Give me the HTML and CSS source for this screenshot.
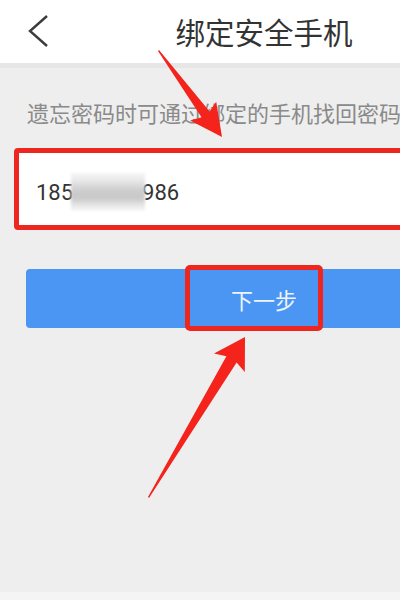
FILE: index.html
```html
<!DOCTYPE html>
<html lang="zh-CN">
<head>
<meta charset="utf-8">
<title>绑定安全手机</title>
<link rel="stylesheet" href="styles.css">
</head>
<body>
<div class="page">
  <header class="topbar">
    <span class="back">
      <svg width="24" height="36" viewBox="0 0 24 36"><polyline points="19,3 2,18 19,33" fill="none" stroke="#3c3c3c" stroke-width="2.4" stroke-linejoin="miter"/></svg>
    </span>
    <h1 class="title">绑定安全手机</h1>
  </header>
  <main class="content">
    <p class="hint">遗忘密码时可通过绑定的手机找回密码</p>
    <div class="field">
      <span class="num">185<span class="mask"></span>986</span>
    </div>
    <div class="btn">
      <span class="btn-label">下一步</span>
      <span class="mark"></span>
    </div>
  </main>
  <div class="band"></div>
  <div class="foot"></div>
  <svg class="arrows" width="528" height="610" viewBox="0 0 528 610">
    <polygon fill="#f4231c" points="159,50 209.6,111.4 216.2,101.7 222,137 190.2,120.5 201.5,117.2 158,51"/>
    <polygon fill="#f4231c" points="148,497 226.4,356.2 214,353.4 245,337 244.8,372 236.6,362.4 149,498"/>
  </svg>
</div>
</body>
</html>
```
FILE: styles.css
```css
html, body {
  margin: 0;
  padding: 0;
  width: 400px;
  height: 610px;
  overflow: hidden;
  background: #efefef;
}
.page {
  position: relative;
  width: 528px;
  height: 610px;
  display: flex;
  flex-direction: column;
  font-family: "Roboto", "Noto Sans CJK SC", sans-serif;
}
.topbar {
  height: 63px;
  background: #ffffff;
  border-bottom: 5px solid #e6e6e6;
  display: flex;
  align-items: center;
  justify-content: center;
  position: relative;
}
.back {
  position: absolute;
  left: 28px;
  top: 13px;
  width: 24px;
  height: 36px;
}
.title {
  margin: 0;
  font-family: "Noto Sans CJK SC", sans-serif;
  font-weight: 400;
  font-size: 29.5px;
  color: #333333;
  line-height: 1;
}
.content {
  flex: 1;
  background: #eeeeee;
  display: flex;
  flex-direction: column;
}
.hint {
  margin: 0;
  padding: 29px 0 0 27px;
  font-family: "Noto Sans CJK SC", sans-serif;
  font-size: 22px;
  line-height: 30px;
  color: #8a8a8a;
  white-space: nowrap;
}
.field {
  margin: 21px 14px 0 14px;
  height: 82px;
  box-sizing: border-box;
  background: #ffffff;
  border: 5px solid #ee2620;
  border-radius: 4px;
  display: flex;
  align-items: center;
  padding: 6px 0 0 17px;
}
.num {
  font-size: 22px;
  color: #333333;
  display: inline-flex;
  align-items: center;
}
.mask {
  display: inline-block;
  width: 74px;
  height: 38px;
  margin: 0 -3px 0 -2px;
  background: linear-gradient(#f6f6f6 0%, #e8e8e8 20%, #cdcdcd 45%, #c8c8c8 65%, #e6e6e6 85%, #f8f8f8 100%);
  filter: blur(1.5px);
}
.btn {
  position: relative;
  margin: 39px 26px 0 26px;
  height: 59px;
  background: #4a96f2;
  border-radius: 4px;
  display: flex;
  align-items: center;
  justify-content: center;
}
.btn-label {
  font-family: "Noto Sans CJK SC", sans-serif;
  font-size: 22px;
  color: #eef4ff;
}
.mark {
  position: absolute;
  left: 159px;
  top: -4px;
  width: 138px;
  height: 66px;
  box-sizing: border-box;
  border: 5px solid #ee2620;
  border-radius: 5px;
}
.band {
  height: 8px;
  background: #f4f4f4;
}
.foot {
  height: 10px;
  background: #ffffff;
}
.arrows {
  position: absolute;
  left: 0;
  top: 0;
  pointer-events: none;
}
```
